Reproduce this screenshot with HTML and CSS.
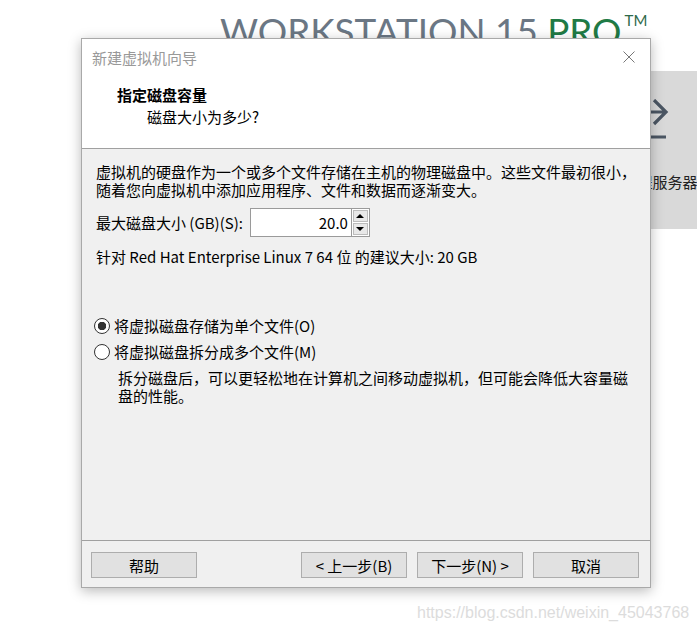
FILE: index.html
```html
<!DOCTYPE html>
<html lang="zh-CN">
<head>
  <meta charset="UTF-8" />
  <meta name="viewport" content="width=device-width, initial-scale=1.0" />
  <title>新建虚拟机向导</title>
  <link rel="stylesheet" href="styles.css">
</head>
<body>
  <div class="app">
    <div class="brand">WORKSTATION 15 <span class="pro">PRO</span><span class="tm">TM</span></div>

    <div class="tiles">
      <div class="tile">
        <svg class="tile-icon" width="48" height="42" viewBox="0 0 48 42">
          <path d="M2 13 H45 M33 1 L45 13 L33 25" fill="none" stroke="#4b5663" stroke-width="3.2" />
          <path d="M2 38 H45" fill="none" stroke="#4b5663" stroke-width="3.2" />
        </svg>
        <div class="tile-label">连接远程服务器</div>
      </div>
    </div>

    <div class="watermark">https://blog.csdn.net/weixin_45043768</div>

    <div class="dialog">
      <div class="head">
        <div class="titlebar">
          <span class="title">新建虚拟机向导</span>
          <svg class="close" width="12" height="12" viewBox="0 0 12 12">
            <path d="M0.5 0.5 L11.5 11.5 M11.5 0.5 L0.5 11.5" stroke="#777" stroke-width="1" fill="none" />
          </svg>
        </div>
        <div class="heading">
          <div class="heading-title">指定磁盘容量</div>
          <div class="heading-sub">磁盘大小为多少?</div>
        </div>
      </div>

      <div class="body">
        <p class="intro">虚拟机的硬盘作为一个或多个文件存储在主机的物理磁盘中。这些文件最初很小，<br>随着您向虚拟机中添加应用程序、文件和数据而逐渐变大。</p>

        <div class="size-row">
          <label for="disk-size">最大磁盘大小 (GB)(S):</label>
          <div class="spin">
            <input type="text" id="disk-size" value="20.0">
            <div class="spin-arrows">
              <button class="spin-btn"><span class="tri-up"></span></button>
              <button class="spin-btn"><span class="tri-down"></span></button>
            </div>
          </div>
        </div>

        <p class="hint">针对 Red Hat Enterprise Linux 7 64 位 的建议大小: 20 GB</p>

        <div class="options">
          <label class="radio-row"><input type="radio" name="split" checked> 将虚拟磁盘存储为单个文件(O)</label>
          <label class="radio-row"><input type="radio" name="split"> 将虚拟磁盘拆分成多个文件(M)</label>
          <p class="option-note">拆分磁盘后，可以更轻松地在计算机之间移动虚拟机，但可能会降低大容量磁<br>盘的性能。</p>
        </div>
      </div>

      <div class="footer">
        <button class="btn">帮助</button>
        <div class="spacer"></div>
        <button class="btn">&lt; 上一步(B)</button>
        <button class="btn">下一步(N) &gt;</button>
        <button class="btn">取消</button>
      </div>
    </div>
  </div>
</body>
</html>
```

FILE: styles.css
```css
body {
  margin: 0;
  background: #fff;
  font-family: "Noto Sans CJK SC", sans-serif;
  color: #000;
}

.app {
  position: relative;
  width: 697px;
  height: 634px;
  overflow: hidden;
}

.brand {
  height: 36px;
  padding: 13px 0 0 220px;
  font-family: Lato, sans-serif;
  font-size: 36.8px;
  line-height: 36px;
  color: #6b7784;
  white-space: nowrap;
}

.brand .pro {
  color: #1f7a45;
}

.brand .tm {
  font-size: 15px;
  line-height: 15px;
  vertical-align: top;
  margin-left: 3px;
  color: #2f6a4a;
}

.tiles {
  display: flex;
  justify-content: flex-end;
  margin-top: 22px;
  margin-right: -38px;
}

.tile {
  width: 180px;
  height: 158px;
  background: #d9d9d9;
  display: flex;
  flex-direction: column;
  align-items: center;
}

.tile-icon {
  margin-top: 28px;
}

.tile-label {
  margin-top: 31px;
  font-size: 15px;
  line-height: 20px;
  color: #222;
  white-space: nowrap;
}

.watermark {
  position: absolute;
  left: 417px;
  top: 603px;
  font-family: "Liberation Sans", Arial, sans-serif;
  font-size: 16px;
  line-height: 20px;
  color: #dcdcdc;
}

.dialog {
  position: absolute;
  left: 81px;
  top: 38px;
  width: 570px;
  height: 550px;
  box-sizing: border-box;
  border: 1px solid #a9a9a9;
  background: #f0f0f0;
  box-shadow: 0 3px 12px rgba(0, 0, 0, 0.28);
  display: flex;
  flex-direction: column;
}

.head {
  background: #fff;
  border-bottom: 1px solid #a0a0a0;
}

.titlebar {
  height: 36px;
  display: flex;
  align-items: center;
  justify-content: space-between;
  padding: 0 15px 0 10px;
}

.title {
  font-size: 15px;
  color: #999;
}

.close {
  display: block;
}

.heading {
  padding: 10px 0 21px 35px;
}

.heading-title {
  font-size: 15px;
  line-height: 20px;
  font-weight: bold;
}

.heading-sub {
  margin-top: 2px;
  padding-left: 30px;
  font-size: 15px;
  line-height: 20px;
}

.body {
  flex: 1;
  padding: 14px 10px 0 14px;
  font-size: 15px;
  line-height: 18px;
}

.body p {
  margin: 0;
}

.size-row {
  display: flex;
  align-items: center;
  margin-top: 9px;
  gap: 7px;
}

.spin {
  display: flex;
}

.spin input {
  width: 101px;
  height: 29px;
  box-sizing: border-box;
  border: 1px solid #9a9a9a;
  border-right: none;
  padding: 0 3px;
  text-align: right;
  font-family: inherit;
  font-size: 15px;
  background: #fff;
}

.spin-arrows {
  display: flex;
  flex-direction: column;
  width: 19px;
  height: 29px;
  box-sizing: border-box;
  border: 1px solid #9a9a9a;
  background: #fff;
  padding: 1px;
  gap: 1px;
}

.spin-btn {
  flex: 1;
  padding: 0;
  border: 1px solid #bcbcbc;
  background: #e8e8e8;
  display: flex;
  align-items: center;
  justify-content: center;
}

.tri-up {
  border-left: 4px solid transparent;
  border-right: 4px solid transparent;
  border-bottom: 4px solid #000;
}

.tri-down {
  border-left: 4px solid transparent;
  border-right: 4px solid transparent;
  border-top: 4px solid #000;
}

.hint {
  margin-top: 11px !important;
}

.options {
  margin-top: 47px;
}

.radio-row {
  display: flex;
  align-items: center;
  height: 26px;
  margin-left: -2px;
}

.radio-row input {
  appearance: none;
  width: 16px;
  height: 16px;
  margin: 0 4px 0 0;
  border: 1px solid #333;
  border-radius: 50%;
  background: #fff;
  box-sizing: border-box;
}

.radio-row input:checked {
  background: radial-gradient(circle, #333 0 4px, #fff 4.5px);
}

.option-note {
  margin-top: 4px !important;
  padding-left: 22px;
}

.footer {
  border-top: 1px solid #a0a0a0;
  display: flex;
  gap: 10px;
  padding: 11px 11px 9px 9px;
}

.spacer {
  flex: 1;
}

.btn {
  width: 106px;
  height: 26px;
  border: 1px solid #adadad;
  background: #e1e1e1;
  font-family: inherit;
  font-size: 15px;
  color: #000;
  padding: 0;
}
```
